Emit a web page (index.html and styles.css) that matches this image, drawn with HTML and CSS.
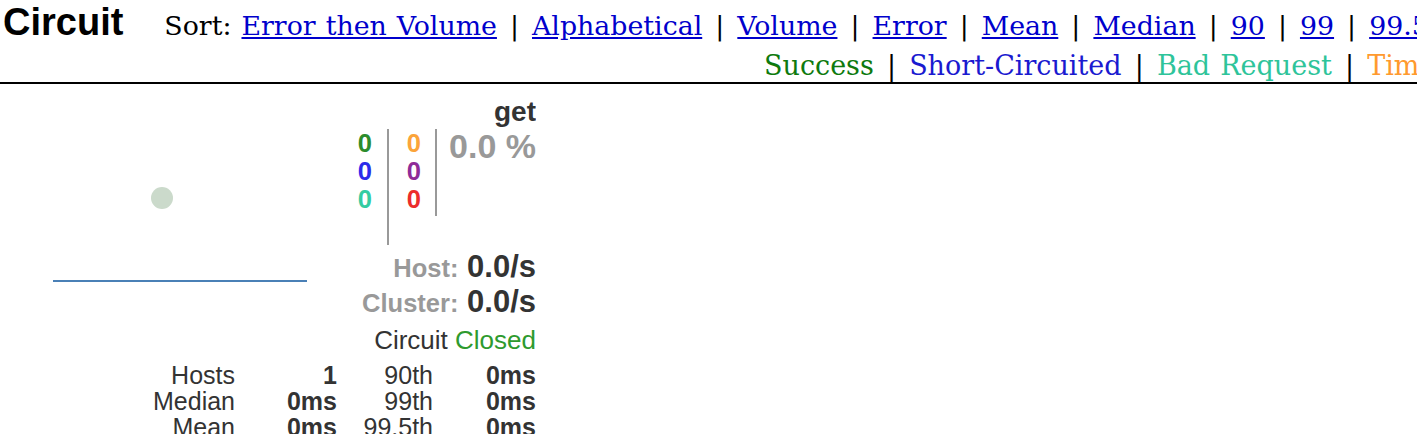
FILE: index.html
```html
<!DOCTYPE html>
<html lang="en">
<head>
    <meta charset="UTF-8">
    <meta name="viewport" content="width=device-width, initial-scale=1.0">
    <link rel="stylesheet" href="styles.css">
    <title>Hystrix Stream</title>
</head>
<body>

<div class="header">
    <div class="header-top">
        <h2 class="title">Circuit</h2>
        <div class="sort-bar">
            Sort: <a href="#">Error then Volume</a> <span class="sep">|</span>
            <a href="#">Alphabetical</a> <span class="sep">|</span>
            <a href="#">Volume</a> <span class="sep">|</span>
            <a href="#">Error</a> <span class="sep">|</span>
            <a href="#">Mean</a> <span class="sep">|</span>
            <a href="#">Median</a> <span class="sep">|</span>
            <a href="#">90</a> <span class="sep">|</span>
            <a href="#">99</a> <span class="sep">|</span>
            <a href="#">99.5</a>
        </div>
    </div>
    <div class="legend">
        <span class="success">Success</span> <span class="sep">|</span>
        <span class="short-circuited">Short-Circuited</span> <span class="sep">|</span>
        <span class="bad-request">Bad Request</span> <span class="sep">|</span>
        <span class="timeout">Timeout</span> <span class="sep">|</span>
        <span class="rejected">Rejected</span> <span class="sep">|</span>
        <span class="failure">Failure</span> <span class="sep">|</span>
        <span class="error-pct">Error %</span>
    </div>
</div>

<div class="monitor">
    <div class="monitor-top">
        <svg class="chart" width="340" height="230" viewBox="0 0 340 230">
            <circle cx="162" cy="114" r="11" fill="#cbdacb"/>
            <line x1="53" y1="197" x2="307" y2="197" stroke="#4a80b6" stroke-width="2"/>
        </svg>

        <div class="stats">
            <div class="name">get</div>

            <div class="counters">
                <div class="cell cell-first">
                    <div class="success">0</div>
                    <div class="short-circuited">0</div>
                    <div class="bad-request">0</div>
                </div>
                <div class="cell cell-second">
                    <div class="timeout">0</div>
                    <div class="rejected">0</div>
                    <div class="failure">0</div>
                </div>
                <div class="error-percentage">0.0 %</div>
            </div>

            <div class="rate">
                <span class="rate-label">Host:</span> <span class="rate-value">0.0/s</span>
            </div>
            <div class="rate">
                <span class="rate-label">Cluster:</span> <span class="rate-value">0.0/s</span>
            </div>
            <div class="circuit-status">
                Circuit <span class="closed">Closed</span>
            </div>
        </div>
    </div>

    <div class="latency-table">
        <div>Hosts</div><div class="val">1</div><div>90th</div><div class="val">0ms</div>
        <div>Median</div><div class="val">0ms</div><div>99th</div><div class="val">0ms</div>
        <div>Mean</div><div class="val">0ms</div><div>99.5th</div><div class="val">0ms</div>
    </div>
</div>

</body>
</html>
```

FILE: styles.css
```css
body {
    margin: 0;
    padding: 0;
    overflow: hidden;
    background: #fff;
    color: #000;
    font-family: "Liberation Sans", Arial, sans-serif;
}

.header {
    border-bottom: 2px solid #000;
    padding-bottom: 1px;
    white-space: nowrap;
}

.header-top {
    display: flex;
    align-items: baseline;
    padding-left: 3px;
}

.title {
    margin: 0;
    font-size: 38px;
    line-height: 44px;
    font-weight: bold;
}

.sort-bar {
    margin-left: 41px;
    font-family: "DejaVu Serif", "Liberation Serif", serif;
    font-size: 26.8px;
    word-spacing: 1.5px;
}

.sort-bar a {
    color: #0000cc;
}

.sep {
    margin: 0 3px;
}

.legend {
    margin-top: 7px;
    padding-left: 764px;
    line-height: 30px;
    font-family: "DejaVu Serif", "Liberation Serif", serif;
    font-size: 27px;
    word-spacing: 1.5px;
}

.legend .success { color: #0e7a0e; }
.legend .short-circuited { color: #1a1ad0; }
.legend .bad-request { color: #2ec49a; }
.legend .timeout { color: #ff9a2e; }
.legend .rejected { color: #8a1a8a; }
.legend .failure { color: #e01a1a; }
.legend .error-pct { color: #888; }

.monitor {
    width: 536px;
    height: 350px;
    overflow: hidden;
    color: #333;
}

.monitor-top {
    display: flex;
}

.chart {
    flex: none;
}

.stats {
    flex: 1;
    text-align: right;
}

.name {
    margin-top: 11px;
    font-size: 28px;
    line-height: 33px;
    font-weight: bold;
}

.counters {
    margin-top: 1px;
    display: flex;
    justify-content: flex-end;
    align-items: flex-start;
    font-weight: bold;
}

.cell {
    font-size: 25.5px;
    line-height: 28px;
    border-right: 2px solid #999;
}

.cell-first {
    padding-right: 15px;
    padding-bottom: 32px;
}

.cell-second {
    padding-left: 18px;
    padding-right: 14px;
    padding-bottom: 3px;
}

.error-percentage {
    margin-left: 12px;
    font-size: 34px;
    line-height: 34px;
    color: #999;
}

.counters .success { color: #2c8c2c; }
.counters .short-circuited { color: #2b2bea; }
.counters .bad-request { color: #34cca2; }
.counters .timeout { color: #fba43a; }
.counters .rejected { color: #8e2c98; }
.counters .failure { color: #ec2c2c; }

.rate {
    font-size: 31px;
    line-height: 35px;
    font-weight: bold;
}

.counters + .rate {
    margin-top: 4px;
}

.rate-label {
    font-size: 25.5px;
    line-height: 20px;
    color: #999;
}

.circuit-status {
    margin-top: 4px;
    font-size: 26px;
    line-height: 35px;
}

.closed {
    color: #2e9a2e;
}

.latency-table {
    margin-top: 4px;
    display: grid;
    grid-template-columns: 235px 102px 96px 103px;
    font-size: 25px;
    line-height: 26px;
    text-align: right;
}

.latency-table .val {
    font-weight: bold;
}
```
